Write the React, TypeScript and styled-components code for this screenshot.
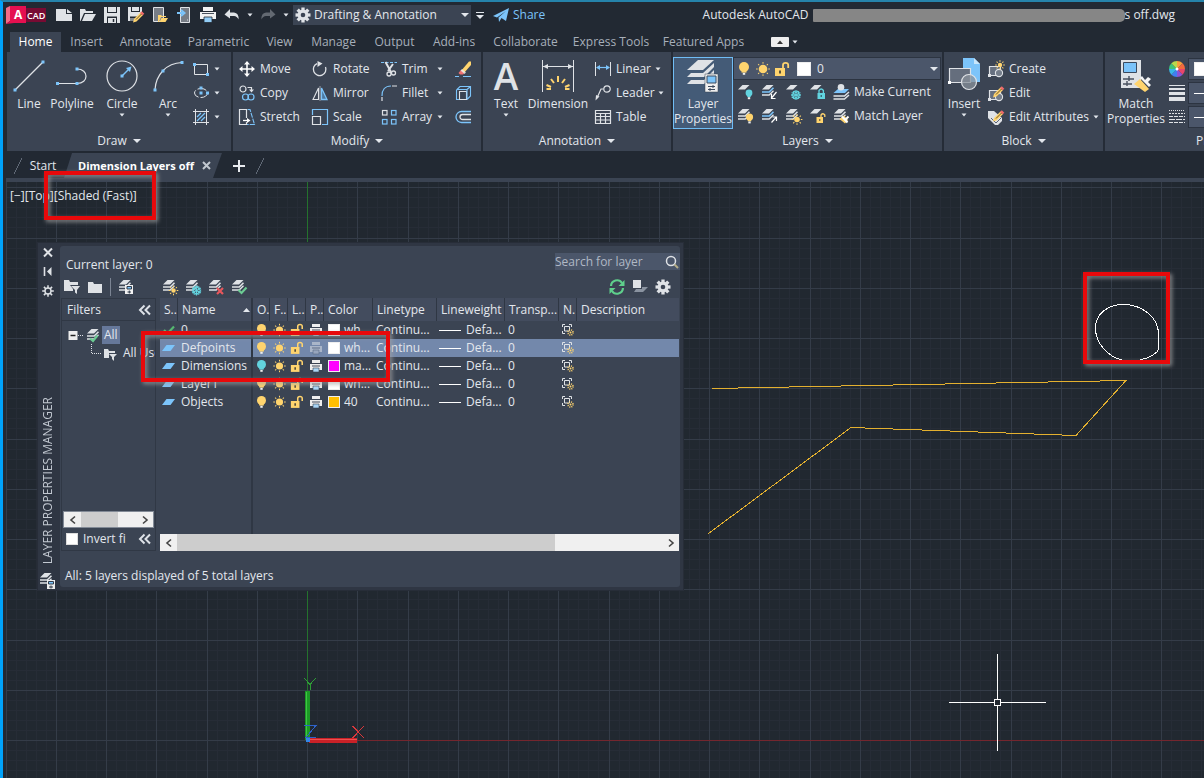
import React from "react";
import styled, { createGlobalStyle, css } from "styled-components";

const c = {
  app: "#222933",
  panel: "#3b4453",
  line: "#252c37",
  field: "#4b566a",
  text: "#e3e7ed",
  muted: "#a7afba",
  icon: "#dfe2e6",
  blue: "#7cc4fa",
  yellow: "#ffd46e",
  cyan: "#62d3df",
  green: "#6bcb93",
  red: "#e8090b",
};

const Global = createGlobalStyle`
  *, *::before, *::after { box-sizing: border-box; }
  body { margin: 0; background: ${c.app}; overflow: hidden; }
  body, button, input, select { font: 12px/16px "Open Sans", "Noto Sans", sans-serif; color: ${c.text}; }
  button { background: none; border: 0; padding: 0; cursor: pointer; }
`;

/* ---------- frame ---------- */
const Window = styled.div`
  position: relative;
  display: flex;
  flex-direction: column;
  min-height: 100vh;
  border-top: 2px solid #2583ab;
  border-left: 3px solid #00a3fb;
  background: ${c.app};
  overflow: hidden;
`;
const TitleBar = styled.header`
  display: flex;
  align-items: center;
  height: 26px;
  padding-left: 3px;
  overflow: hidden;
`;
const Logo = styled.div`
  display: flex;
  width: 40px;
  height: 18px;
  margin-right: 8px;
`;
const QuickTools = styled.div`
  display: flex;
  align-items: center;
  gap: 4px;
`;
const QuickButton = styled.button<{ $w?: number }>`
  display: flex;
  align-items: center;
  justify-content: center;
  width: ${(p) => p.$w ?? 20}px;
  height: 20px;
`;
const Workspace = styled.label`
  display: flex;
  align-items: center;
  width: 178px;
  height: 20px;
  margin-left: 3px;
  padding: 0 2px 0 2px;
  background: ${c.panel};
`;
const PlainSelect = styled.select`
  flex: 1;
  min-width: 0;
  appearance: none;
  border: 0;
  padding: 0 3px;
  background: transparent;
  outline: 0;
`;
const Share = styled.a`
  display: flex;
  align-items: center;
  gap: 4px;
  margin-left: 4px;
  color: ${c.blue};
  text-decoration: none;
`;
const Title = styled.h1`
  display: flex;
  align-items: center;
  margin: 0 29px 0 auto;
  font-size: 12px;
  font-weight: 400;
  white-space: nowrap;
`;
const Redaction = styled.span`
  width: 312px;
  height: 13px;
  margin-left: 4px;
  border-radius: 1px 5px 5px 1px;
  background: #868686;
`;

/* ---------- ribbon ---------- */
const Tabs = styled.nav`
  display: flex;
  align-items: stretch;
  height: 24px;
  padding: 4px 0 0 7px;
`;
const Tab = styled.button<{ $w: number; $active?: boolean }>`
  flex: none;
  width: ${(p) => p.$w}px;
  color: ${(p) => (p.$active ? "#fff" : c.muted)};
  background: ${(p) => (p.$active ? c.panel : "transparent")};
  white-space: nowrap;
`;
const TabTools = styled.button`
  display: flex;
  align-items: center;
  gap: 3px;
  margin-left: 20px;
`;
const Ribbon = styled.div`
  display: flex;
  margin-left: 4px;
  height: 99px;
  background: ${c.panel};
  overflow: hidden;
`;
const Panel = styled.section<{ $w: number }>`
  flex: none;
  display: flex;
  flex-direction: column;
  width: ${(p) => p.$w}px;
  padding-top: 5px;
  border-right: 2px solid ${c.line};
`;
const PanelBody = styled.div`
  display: flex;
  height: 72px;
`;
const PanelTitle = styled.button`
  display: flex;
  align-items: center;
  justify-content: center;
  gap: 6px;
  height: 22px;
  padding-top: 2px;
`;
const BigButton = styled.button<{ $w: number; $active?: boolean }>`
  flex: none;
  display: flex;
  flex-direction: column;
  align-items: center;
  width: ${(p) => p.$w}px;
  height: 72px;
  padding-top: 2px;
  border: 1px solid transparent;
  line-height: 15px;
  ${(p) =>
    p.$active &&
    css`
      border-color: #70bdf5;
      background: #445b77;
    `}
`;
const BigLabel = styled.span`
  margin: 4px 0 2px;
  white-space: nowrap;
`;
const Column = styled.div<{ $w?: number; $pad?: number }>`
  flex: none;
  display: flex;
  flex-direction: column;
  width: ${(p) => (p.$w ? p.$w + "px" : "auto")};
  padding-left: ${(p) => p.$pad ?? 0}px;
`;
const SmallButton = styled.button`
  display: flex;
  align-items: center;
  gap: 5px;
  height: 24px;
  white-space: nowrap;
`;
const Push = styled.span<{ $w: number }>`
  width: ${(p) => p.$w}px;
  text-align: left;
`;
const LayerSelect = styled.label`
  display: flex;
  align-items: center;
  gap: 3px;
  width: 208px;
  height: 23px;
  padding: 0 2px;
  border: 1px solid #2c3441;
  background: ${c.field};
`;
const Swatch = styled.span<{ $color: string; $size?: number }>`
  flex: none;
  width: ${(p) => p.$size ?? 12}px;
  height: ${(p) => p.$size ?? 12}px;
  border: 1px solid #eee;
  background: ${(p) => p.$color};
`;
const IconRow = styled.div`
  display: flex;
  align-items: center;
  gap: 8px;
  height: 24px;
  padding-left: 4px;
`;
const PropField = styled.div`
  display: flex;
  align-items: center;
  width: 120px;
  height: 22px;
  margin: 1px 0;
  padding-left: 5px;
  border: 1px solid #2c3441;
  background: ${c.field};
`;

/* ---------- document tabs ---------- */
const DocTabs = styled.div`
  display: flex;
  align-items: center;
  height: 31px;
  margin-left: 3px;
  padding: 2px 0 0 8px;
  border-bottom: 4px solid ${c.panel};
`;
const Slash = styled.span`
  width: 8px;
  height: 16px;
  background: linear-gradient(to bottom right, transparent 46%, #606976 46%, #606976 54%, transparent 54%);
`;
const DocTab = styled.button`
  width: 42px;
  height: 25px;
`;
const ActiveTab = styled.button`
  display: flex;
  align-items: center;
  gap: 8px;
  width: 158px;
  height: 25px;
  padding-left: 14px;
  background: ${c.panel};
  clip-path: polygon(8px 0, 100% 0, calc(100% - 9px) 100%, 0 100%);
  color: #fff;
  font-size: 11px;
  font-weight: 700;
  white-space: nowrap;
`;

/* ---------- drawing area ---------- */
const Canvas = styled.main`
  position: relative;
  flex: 1;
  min-height: 596px;
  margin-left: 3px;
  background: #212830;
  overflow: hidden;
`;
const Drawing = styled.svg`
  position: absolute;
  inset: 0;
  width: 100%;
  height: 100%;
`;
const ViewLabel = styled.div`
  position: absolute;
  left: 4px;
  top: 6px;
  display: flex;
`;
const Marker = styled.div<{ $x: number; $y: number; $w: number; $h: number }>`
  position: absolute;
  left: ${(p) => p.$x}px;
  top: ${(p) => p.$y}px;
  width: ${(p) => p.$w}px;
  height: ${(p) => p.$h}px;
  border: 4px solid ${c.red};
  filter: drop-shadow(2px 2px 2px rgba(160, 160, 160, 0.8));
  pointer-events: none;
`;

/* ---------- palette ---------- */
const Palette = styled.section`
  position: absolute;
  left: 31px;
  top: 60px;
  display: flex;
  width: 647px;
  padding: 3px 3px 3px 0;
  border: 1px solid #272d38;
  background: #2f3643;
`;
const Strip = styled.div`
  flex: none;
  display: flex;
  flex-direction: column;
  align-items: center;
  gap: 5px;
  width: 22px;
  margin-bottom: -3px;
  padding-right: 2px;
`;
const StripTitle = styled.h2`
  margin: auto 0 3px;
  font-size: 12px;
  font-weight: 400;
  line-height: 16px;
  color: #c3c9d2;
  writing-mode: vertical-rl;
  transform: rotate(180deg);
  white-space: nowrap;
`;
const Main = styled.div`
  flex: 1;
  min-width: 0;
  padding-left: 1px;
  border-radius: 3px;
  background: ${c.panel};
`;
const PaletteTop = styled.div`
  display: flex;
  justify-content: space-between;
  align-items: flex-end;
  height: 27px;
  padding-left: 5px;
`;
const Search = styled.label`
  display: flex;
  align-items: center;
  width: 125px;
  height: 17px;
  margin-bottom: 3px;
  background: ${c.field};
`;
const SearchInput = styled.input`
  flex: 1;
  min-width: 0;
  height: 16px;
  padding: 0;
  border: 0;
  outline: 0;
  background: transparent;
  &::placeholder {
    color: #b0b8c5;
    opacity: 1;
  }
`;
const PaletteTools = styled.div`
  display: flex;
  align-items: center;
  gap: 7px;
  height: 25px;
  padding: 3px 9px 0 3px;
`;
const Rule = styled.span`
  width: 1px;
  height: 18px;
  background: #7b8493;
`;
const Gap = styled.span<{ $w?: number }>`
  width: ${(p) => p.$w ?? 0}px;
  flex: ${(p) => (p.$w ? "none" : "1")};
`;
const Split = styled.div`
  display: flex;
  gap: 4px;
  height: 253px;
  padding-right: 1px;
`;
const Filters = styled.div`
  flex: none;
  display: flex;
  flex-direction: column;
  width: 95px;
  border: 1px solid #303845;
  overflow: hidden;
`;
const FilterHead = styled.div`
  display: flex;
  align-items: center;
  justify-content: space-between;
  height: 22px;
  padding: 0 3px 0 5px;
  border-bottom: 1px solid #303845;
`;
const Tree = styled.ul`
  flex: 1;
  margin: 0;
  padding: 5px 0 0 6px;
  list-style: none;
`;
const TreeItem = styled.li<{ $depth?: number }>`
  display: flex;
  align-items: center;
  gap: 4px;
  height: 18px;
  padding-left: ${(p) => (p.$depth ?? 0) * 23}px;
  white-space: nowrap;
`;
const TreeLabel = styled.span<{ $selected?: boolean }>`
  height: 18px;
  padding: 0 2px;
  line-height: 18px;
  background: ${(p) => (p.$selected ? "#66789a" : "transparent")};
`;
const Scroll = styled.div<{ $h: number }>`
  flex: none;
  display: flex;
  height: ${(p) => p.$h}px;
  background: #f0f0f0;
`;
const ScrollFrame = styled.div`
  margin: 0 1px;
  border: 1px solid #828a96;
`;
const ScrollButton = styled.button`
  display: flex;
  align-items: center;
  justify-content: center;
  width: 17px;
`;
const Track = styled.div`
  flex: 1;
`;
const Thumb = styled.div<{ $pct: number }>`
  width: ${(p) => p.$pct}%;
  height: 100%;
  background: #cdcdcd;
`;
const InvertRow = styled.div`
  display: flex;
  align-items: center;
  justify-content: space-between;
  height: 22px;
  padding: 0 3px 0 4px;
`;
const CheckLabel = styled.label`
  display: flex;
  align-items: center;
  gap: 5px;
  width: 62px;
  overflow: hidden;
  white-space: nowrap;
`;
const Check = styled.input`
  flex: none;
  appearance: none;
  width: 12px;
  height: 12px;
  margin: 0;
  border: 1px solid #ddd;
  background: #fff;
`;
const Grid = styled.div`
  flex: 1;
  min-width: 0;
  display: flex;
  flex-direction: column;
  justify-content: space-between;
  background: linear-gradient(to right, transparent 91px, #2f3744 91px, #2f3744 93px, transparent 93px);
`;
const LayerTable = styled.table`
  width: 100%;
  table-layout: fixed;
  border-collapse: separate;
  border-spacing: 0;
`;
const Th = styled.th<{ $split?: boolean }>`
  height: 23px;
  padding: 0 0 0 4px;
  border-right: ${(p) => (p.$split ? 2 : 1)}px solid #2f3744;
  background: #434c5e;
  font-weight: 400;
  text-align: left;
  white-space: nowrap;
  overflow: hidden;
  &:last-child {
    border-right: 0;
  }
`;
const SortHead = styled.span`
  display: flex;
  align-items: center;
  justify-content: space-between;
`;
const Td = styled.td<{ $split?: boolean; $pad?: number }>`
  height: 18px;
  padding: 0 0 0 ${(p) => p.$pad ?? 2}px;
  border-right: ${(p) => (p.$split ? "2px solid #2f3744" : "0")};
  line-height: 18px;
  white-space: nowrap;
  overflow: hidden;
`;
const Tr = styled.tr<{ $selected?: boolean }>`
  background: ${(p) => (p.$selected ? "#7388ab" : "transparent")};
`;
const Cell = styled.span`
  display: flex;
  align-items: center;
  gap: 4px;
`;
const Weight = styled.span`
  width: 22px;
  height: 1px;
  margin-right: 1px;
  background: #fff;
`;
const Status = styled.p`
  margin: 0;
  padding: 17px 0 3px 4px;
`;

/* ---------- icons ---------- */
const Glyph = styled.svg`
  flex: none;
  display: block;
  overflow: visible;
`;
type IcoProps = { s?: number; h?: number; children?: React.ReactNode };
const Ico = ({ s = 16, h, children }: IcoProps) => (
  <Glyph width={s} height={h ?? s} viewBox={`0 0 ${s} ${h ?? s}`} fill="none" stroke="none" aria-hidden>
    {children}
  </Glyph>
);
const Caret = ({ big }: { big?: boolean }) =>
  big ? (
    <Ico s={8} h={4}><path d="M0 0H8L4 4Z" fill={c.text} /></Ico>
  ) : (
    <Ico s={6} h={4}><path d="M0.5 0.5H5.5L3 3.5Z" fill={c.text} /></Ico>
  );
const Dot = ({ x, y }: { x: number; y: number }) => <rect x={x - 1.5} y={y - 1.5} width="3" height="3" fill={c.blue} />;
const SunShape = ({ x, y, r = 3, color = c.yellow }: { x: number; y: number; r?: number; color?: string }) => (
  <g>
    <circle cx={x} cy={y} r={r} fill={color} />
    {[0, 45, 90, 135, 180, 225, 270, 315].map((a) => (
      <path key={a} d={`M${x} ${y - r - 1}V${y - r - 2.6}`} stroke={color} transform={`rotate(${a} ${x} ${y})`} />
    ))}
  </g>
);
const Flake = ({ x, y }: { x: number; y: number }) => (
  <g stroke={c.cyan} strokeWidth="1.2">
    {[0, 60, 120].map((a) => (
      <path key={a} d={`M${x} ${y - 5}V${y + 5}M${x - 2} ${y - 4.2}L${x} ${y - 2.2}L${x + 2} ${y - 4.2}M${x - 2} ${y + 4.2}L${x} ${y + 2.2}L${x + 2} ${y + 4.2}`} transform={`rotate(${a} ${x} ${y})`} />
    ))}
  </g>
);
const BulbShape = ({ x, y, r = 3.2, color = c.yellow }: { x: number; y: number; r?: number; color?: string }) => (
  <g>
    <circle cx={x} cy={y} r={r} fill={color} />
    <path d={`M${x - r * 0.5} ${y + r * 0.7}H${x + r * 0.5}V${y + r + 0.6}H${x - r * 0.5}Z`} fill={color} />
    <rect x={x - 1.2} y={y + r + 0.8} width="2.4" height="2" fill="#eee" />
  </g>
);
const Sheet = ({ y = 0 }: { y?: number }) => <path d={`M5.5 ${y + 1}H12.5L8 ${y + 5.5}H1Z`} fill={c.icon} />;
const Stack = ({ mid = c.icon }: { mid?: string }) => (
  <g>
    <Sheet />
    <path d="M1 8H8.2L12.5 3.8" stroke={mid} strokeWidth="1.6" />
    <path d="M1 11H8.2L12.5 6.8" stroke={c.icon} strokeWidth="1.4" />
  </g>
);
const BulbIcon = ({ color, big }: { color?: string; big?: boolean }) => (
  <Ico s={big ? 16 : 14}>{big ? <BulbShape x={8} y={6} r={5} color={color} /> : <BulbShape x={7.5} y={5.5} r={4.5} color={color} />}</Ico>
);
const SunIcon = ({ big }: { big?: boolean }) => (
  <Ico s={big ? 16 : 14}>{big ? <SunShape x={8} y={8} r={4.3} /> : <SunShape x={7.5} y={7} r={3.6} />}</Ico>
);
const LockIcon = ({ big }: { big?: boolean }) => (
  <Ico s={big ? 16 : 14}>
    <g transform={big ? undefined : "scale(.86)"}>
      <path d="M1 7H11V15H1Z" fill={c.yellow} />
      <path d="M9 7V4Q9 1.8 11.6 1.8T14.2 4V7" stroke={c.yellow} strokeWidth="1.8" />
      <path d="M6 9.5V12.5" stroke="#4b4636" strokeWidth="1.8" />
    </g>
  </Ico>
);
const PrinterIcon = ({ dim }: { dim?: boolean }) => (
  <Ico s={14}>
    <g opacity={dim ? 0.45 : 1}>
      <path d="M3 1H11V4H3Z" fill="#eee" />
      <path d="M1 5H13V11H1Z" fill="#eee" />
      <path d="M3 7H11" stroke="#444d5c" />
      <path d="M4 9H10V13H4Z" fill={dim ? "#c3cad4" : "#a9d4f5"} stroke="#3b4453" strokeWidth=".6" />
    </g>
  </Ico>
);
const gearPath = (cx: number, cy: number, r: number) =>
  [0, 45, 90, 135].map((a) => (
    <rect key={a} x={cx - r * 0.22} y={cy - r} width={r * 0.44} height={r * 2} fill={c.icon} transform={`rotate(${a} ${cx} ${cy})`} />
  ));
const GearIcon = ({ hole = c.panel }: { hole?: string }) => (
  <Ico>{gearPath(8, 8, 7.5)}<circle cx="8" cy="8" r="5.4" fill={c.icon} /><circle cx="8" cy="8" r="2.3" fill={hole} /></Ico>
);
const Chevrons = () => (
  <Ico s={14} h={12}><path d="M6.5 1.5L2 6L6.5 10.5M12 1.5L7.5 6L12 10.5" stroke="#dde1e7" strokeWidth="2" /></Ico>
);
const Pencil = () => (
  <g>
    <path d="M6 9L12.5 2.5L15 5L8.5 11.5L5 12.5Z" fill={c.yellow} />
    <path d="M12 3L13.8 1.2L16.3 3.7L14.5 5.5Z" fill="#ef6b6b" />
    <path d="M8 9.5L13.5 4" stroke="#6a5223" />
  </g>
);

/* ---------- content ---------- */
const SmallItem = ({ icon, label, w, caret }: { icon: React.ReactNode; label?: string; w?: number; caret?: boolean }) => (
  <SmallButton aria-label={label}>
    {icon}
    {label && (w ? <Push $w={w}>{label}</Push> : <span>{label}</span>)}
    {caret && <Caret />}
  </SmallButton>
);
const BigItem = ({ icon, label, w, caret, active }: { icon: React.ReactNode; label: string[]; w: number; caret?: boolean; active?: boolean }) => (
  <BigButton $w={w} $active={active}>
    {icon}
    <BigLabel>{label.map((l, i) => <React.Fragment key={l}>{i > 0 && <br />}{l}</React.Fragment>)}</BigLabel>
    {caret && <Caret />}
  </BigButton>
);
const RibbonPanel = ({ w, title, children }: { w: number; title: string; children: React.ReactNode }) => (
  <Panel $w={w}>
    <PanelBody>{children}</PanelBody>
    <PanelTitle>{title}<Caret big /></PanelTitle>
  </Panel>
);

const TABS: [string, number][] = [
  ["Home", 51], ["Insert", 51], ["Annotate", 67], ["Parametric", 79], ["View", 43], ["Manage", 65],
  ["Output", 57], ["Add-ins", 62], ["Collaborate", 81], ["Express Tools", 90], ["Featured Apps", 95],
];

const TopBar = () => (
  <TitleBar>
    <Logo>
      <Ico s={40} h={18}>
        <path d="M0 2L4 0V15L0 18Z" fill="#f36a86" />
        <path d="M4 0H20V17H8L0 18L4 15Z" fill="#e51050" />
        <path d="M20 2H40V16H20Z" fill="#780b33" />
        <text x="8" y="13" fontSize="12" fontWeight="700" fill="#fff">A</text>
        <text x="21" y="13" fontSize="9" fontWeight="600" fill="#fff">CAD</text>
      </Ico>
    </Logo>
    <QuickTools>
      <QuickButton aria-label="New"><Ico><path d="M0 2H10V7H16V14H0Z" fill={c.icon} /><path d="M11 2L16 6H11Z" fill={c.icon} /></Ico></QuickButton>
      <QuickButton aria-label="Open"><Ico><path d="M0 14V2H5L6 4H13V6H4L0.5 14Z" fill={c.icon} /><path d="M5 7H16L12 14H2Z" fill={c.icon} /></Ico></QuickButton>
      <QuickButton aria-label="Save"><Ico><path d="M0 0H16V16H0Z" fill={c.icon} /><path d="M3 0H13V6H3ZM3 9.5H13V16H3Z" fill={c.app} /><path d="M4 0H12V5H4ZM4 11H12V16H4Z" fill={c.icon} /><path d="M9.5 12V15" stroke={c.app} strokeWidth="1.5" /></Ico></QuickButton>
      <QuickButton aria-label="Save As"><Ico><path d="M0 0H14V8L7 14H0Z" fill={c.icon} /><path d="M3 0H12V5H3ZM2 9.5H9V14H2Z" fill={c.app} /><path d="M4 0H11V4H4Z" fill={c.icon} /><path d="M3 11V14M5 11V14M7 11V14" stroke={c.icon} /><g transform="translate(0 3)"><Pencil /></g></Ico></QuickButton>
      <QuickButton aria-label="Open from mobile"><Ico><path d="M1.5 0.5H11.5V14.5H1.5Z" fill="#777d86" stroke={c.icon} /><path d="M6 15V8H9L10 9H14V10H9L7 15Z" fill={c.yellow} /><path d="M9.5 11H16L13.5 15H7.5Z" fill={c.yellow} /></Ico></QuickButton>
      <QuickButton aria-label="Save to mobile"><Ico><path d="M4.5 0.5H13.5V15.5H4.5Z" fill="#777d86" stroke={c.icon} /><path d="M1 6H7M5 3L8.5 6L5 9" stroke={c.blue} strokeWidth="2" /><path d="M11 13H12" stroke={c.icon} /></Ico></QuickButton>
      <QuickButton aria-label="Plot"><Ico><path d="M3 0H13V4H3ZM0 5H16V12H0Z" fill="#f2f2f2" /><path d="M2 6.5H14" stroke="#4a515d" /><path d="M4 10H12V15.5H4Z" fill="#92ccf6" stroke={c.app} strokeWidth=".8" /></Ico></QuickButton>
      <QuickButton aria-label="Undo"><Ico><path d="M6 2L0.5 7.5L6 11.5V9H10Q13 9 14.5 12.5Q15 6 10 5.5H6Z" fill={c.icon} /></Ico></QuickButton>
      <QuickButton $w={8} aria-label="Undo list"><Caret /></QuickButton>
      <QuickButton aria-label="Redo"><Ico><path d="M10 2L15.5 7.5L10 11.5V9H6Q3 9 1.5 12.5Q1 6 6 5.5H10Z" fill="#636972" /></Ico></QuickButton>
      <QuickButton $w={8} aria-label="Redo list"><Caret /></QuickButton>
    </QuickTools>
    <Workspace>
      <GearIcon />
      <PlainSelect aria-label="Workspace"><option>Drafting &amp; Annotation</option></PlainSelect>
      <Caret big />
    </Workspace>
    <QuickButton $w={18} aria-label="Customize"><Ico s={8} h={7}><path d="M0 0.5H8" stroke={c.text} /><path d="M0 3H8L4 7Z" fill={c.text} /></Ico></QuickButton>
    <Share href="#share"><Ico><path d="M0 9L16 1L13 14L8.5 11L6 15L5.5 10.5L13 4L4 10.5Z" fill={c.blue} /></Ico>Share</Share>
    <Title>Autodesk AutoCAD<Redaction />s off.dwg</Title>
  </TitleBar>
);

const DrawPanel = () => (
  <RibbonPanel w={226} title="Draw">
    <BigItem w={44} label={["Line"]} icon={<Ico s={32}><path d="M2.5 29.5L29.5 2.5" stroke={c.icon} strokeWidth="1.2" /><Dot x={2} y={30} /><Dot x={30} y={2} /></Ico>} />
    <BigItem w={42} label={["Polyline"]} icon={<Ico s={32}><path d="M2 23.5H21C33 23.5 33 9 21 9" stroke={c.icon} strokeWidth="1.2" /><Dot x={1.5} y={23.5} /><Dot x={21} y={23.5} /><Dot x={21} y={9} /></Ico>} />
    <BigItem w={58} caret label={["Circle"]} icon={<Ico s={32}><circle cx="16" cy="16" r="15" stroke={c.icon} strokeWidth="1.2" /><path d="M16 16L23 9" stroke={c.blue} strokeWidth="1.4" /><path d="M25.5 6.5L24 12L20 8Z" fill={c.blue} /><Dot x={16} y={16} /></Ico>} />
    <BigItem w={34} caret label={["Arc"]} icon={<Ico s={32}><path d="M3 29.5C4 15 14 3 30 2.5" stroke={c.icon} strokeWidth="1.2" /><Dot x={3} y={30} /><Dot x={11} y={11} /><Dot x={30} y={2.5} /></Ico>} />
    <Column $pad={8}>
      <SmallButton aria-label="Rectangle"><Ico><path d="M1.5 3.5H14.5V13.5H1.5Z" stroke={c.icon} /><Dot x={1.5} y={3.5} /><Dot x={14.5} y={13.5} /></Ico><Caret /></SmallButton>
      <SmallButton aria-label="Ellipse"><Ico><ellipse cx="8" cy="8" rx="6.5" ry="4.5" stroke={c.icon} strokeDasharray="9 2" /><Dot x={8} y={8} /><Dot x={8} y={3} /><Dot x={14.5} y={8} /></Ico><Caret /></SmallButton>
      <SmallButton aria-label="Hatch"><Ico><path d="M2.5 0V16M13.5 0V16M0 2.5H16M0 13.5H16" stroke={c.icon} /><path d="M4 8L8 4M4 12L12 4M8 12L12 8" stroke={c.blue} strokeWidth="1.3" /></Ico><Caret /></SmallButton>
    </Column>
  </RibbonPanel>
);

const ModifyPanel = () => (
  <RibbonPanel w={250} title="Modify">
    <Column $w={79} $pad={6}>
      <SmallItem label="Move" icon={<Ico><path d="M8 1V15M1 8H15" stroke="#fff" strokeWidth="1.6" /><path d="M8 0L11 3.5H5ZM8 16L11 12.5H5ZM0 8L3.5 5V11ZM16 8L12.5 5V11Z" fill="#fff" /></Ico>} />
      <SmallItem label="Copy" icon={<Ico><circle cx="4" cy="4" r="3" stroke={c.icon} strokeWidth="1.2" /><path d="M8.5 2.5H12.5V5" stroke={c.icon} strokeWidth="1.2" /><path d="M10 4.5H15L12.5 7.5Z" fill={c.icon} /><circle cx="6.5" cy="12" r="3" stroke={c.blue} strokeWidth="1.2" /><circle cx="12" cy="12" r="3" stroke={c.blue} strokeWidth="1.2" /></Ico>} />
      <SmallItem label="Stretch" icon={<Ico><path d="M7.5 9V0.5H0.5V15.5H7.5V13" stroke={c.icon} strokeWidth="1.2" /><path d="M4 11.5H9" stroke="#fff" strokeWidth="1.3" /><path d="M8 9L11.5 11.5L8 14Z" fill="#fff" /><path d="M8.5 0.5H11L15.5 15.5H8" stroke={c.blue} strokeWidth="1.1" strokeDasharray="5 1" /></Ico>} />
    </Column>
    <Column $w={69}>
      <SmallItem label="Rotate" icon={<Ico><path d="M5 2.6A6.3 6.3 0 1 0 13.5 6" stroke={c.icon} strokeWidth="1.3" /><path d="M5.500 0L10.5 2.5L5.5 6Z" fill={c.icon} /></Ico>} />
      <SmallItem label="Mirror" icon={<Ico><path d="M6.5 3V14.5H1Z" stroke={c.icon} strokeWidth="1.1" /><path d="M9.5 3V14.5H15Z" stroke={c.blue} strokeWidth="1.3" fill="#4d79a0" /><path d="M8 1V16" stroke={c.icon} strokeWidth=".6" /></Ico>} />
      <SmallItem label="Scale" icon={<Ico><path d="M0.5 6V0.5H15.5V15.5H10" stroke={c.blue} strokeWidth="1.2" /><path d="M0.5 7.5H8.5V15.5H0.5Z" stroke={c.icon} strokeWidth="1.2" /></Ico>} />
    </Column>
    <Column $w={74}>
      <SmallItem label="Trim" w={30} caret icon={<Ico><path d="M0 1.5H16" stroke={c.blue} strokeDasharray="3 1.5" /><path d="M4.500 1L10 11M12 3L7 10" stroke={c.icon} strokeWidth="2" /><circle cx="8" cy="13" r="2" stroke={c.icon} strokeWidth="1.3" /><circle cx="12.5" cy="12" r="2" stroke={c.icon} strokeWidth="1.3" /></Ico>} />
      <SmallItem label="Fillet" w={30} caret icon={<Ico><path d="M1 16V12M11 1H16" stroke={c.icon} strokeWidth="1.2" /><path d="M1 11C1 5 4 1 10 1" stroke={c.blue} strokeWidth="1.2" /></Ico>} />
      <SmallItem label="Array" w={30} caret icon={<Ico>{[[1, 1], [10, 1], [1, 10], [10, 10]].map(([x, y], i) => <rect key={i} x={x + 0.5} y={y + 0.5} width="4.5" height="4.5" stroke={i ? c.blue : c.icon} strokeWidth="1.2" />)}</Ico>} />
    </Column>
    <Column>
      <SmallButton aria-label="Erase"><Ico><path d="M6 10L14 0.5H16V4L9 12Z" fill={c.yellow} /><path d="M6 9L9.5 12.2L8 13.5H5L3.5 12Z" fill="#f07171" /><path d="M5.5 9.5L7 8L11 11.5L9.5 13Z" fill="#eee" opacity=".8" /><path d="M0 15.5H4M8 15.5H16" stroke={c.blue} /></Ico></SmallButton>
      <SmallButton aria-label="Explode"><Ico><path d="M4.5 6.5H11.5V14.5H4.5Z" stroke={c.icon} strokeWidth="1.1" /><path d="M1.5 5V14.5H4M1.5 5L5 1.5H15.5V11L12 14.5M1.5 4.5H12V14M12 4.5L15.5 1.5" stroke={c.blue} strokeWidth="1.1" /></Ico></SmallButton>
      <SmallButton aria-label="Offset"><Ico><path d="M16 2.5H6.5A5.5 5.5 0 0 0 6.5 13.5H16" stroke={c.blue} strokeWidth="1.3" /><path d="M16 5.5H7.5A2.5 2.5 0 0 0 7.5 10.5H16" stroke={c.icon} strokeWidth="1.3" /></Ico></SmallButton>
    </Column>
  </RibbonPanel>
);

const AnnotationPanel = () => (
  <RibbonPanel w={190} title="Annotation">
    <BigItem w={46} caret label={["Text"]} icon={<Ico s={32}><text x="16" y="30" textAnchor="middle" fontSize="37" fontWeight="600" fill={c.icon}>A</text></Ico>} />
    <BigItem w={58} label={["Dimension"]} icon={<Ico s={32}><path d="M0.5 0V32M31.5 0V32" stroke={c.icon} /><path d="M1 6.5H31" stroke={c.icon} /><path d="M1 6.5L6 4V9ZM31 6.5L26 4V9Z" fill={c.icon} /><path d="M16 16V22M9 19L12 23M23 19L20 23M4.5 25L9 27M27.5 25L23 27M4.5 29H9M23 29H27.5" stroke={c.yellow} strokeWidth="2" /></Ico>} />
    <Column $pad={8}>
      <SmallItem label="Linear" w={34} caret icon={<Ico><path d="M0.5 1V15M15.5 1V15" stroke={c.icon} /><path d="M2 6.5H14" stroke={c.blue} strokeWidth="1.2" /><path d="M1 6.5L5 4V9ZM15 6.5L11 4V9Z" fill={c.blue} /></Ico>} />
      <SmallItem label="Leader" w={37} caret icon={<Ico><circle cx="12" cy="4" r="3.2" stroke={c.icon} strokeWidth="1.2" /><path d="M8.5 4H6L2 13" stroke={c.icon} strokeWidth="1.2" /><path d="M0.5 15.5L1 10L4.5 11.5Z" fill={c.icon} /></Ico>} />
      <SmallItem label="Table" icon={<Ico><path d="M0.5 1.5H15.5V14.5H0.5ZM0.5 4.5H15.5M0.5 7.5H15.5M0.5 11H15.5M5.500 4.500V14.500M10.500 4.500V14.500" stroke={c.icon} strokeWidth="1.2" /></Ico>} />
    </Column>
  </RibbonPanel>
);

const Device = ({ x, y }: { x: number; y: number }) => (
  <g transform={`translate(${x} ${y})`}>
    <path d="M0 0H13V18H0Z" fill="#eee" stroke={c.panel} strokeWidth=".5" />
    <path d="M2 2H11V9H2Z" fill={c.blue} stroke="#3b4a5e" />
    <path d="M3 12.5H10M3 15.5H10M8 11V14M5 14V17" stroke="#3b4a5e" />
  </g>
);
const LayersPanel = () => (
  <RibbonPanel w={271} title="Layers">
    <BigItem w={60} active label={["Layer", "Properties"]} icon={<Ico s={32}><path d="M11 0H27L16 10H0Z" fill={c.icon} /><path d="M4 13H16L27 3V7L17 17H0ZM4 20H17L27 10V14L17 24H0Z" fill={c.icon} /><Device x={18} y={14} /></Ico>} />
    <Column>
      <LayerSelect>
        <BulbIcon big /><SunIcon big /><LockIcon big /><Gap $w={1} /><Swatch $color="#fff" $size={14} />
        <PlainSelect aria-label="Layer"><option>0</option></PlainSelect>
        <Caret big />
      </LayerSelect>
      <IconRow>
        <Ico><Sheet /><BulbShape x={12} y={9} r={3.4} color={c.cyan} /></Ico>
        <Ico><Stack mid={c.blue} /><path d="M15.5 8L11 13.5M10.5 10V14.5H14.5" stroke="#fff" strokeWidth="1.2" /></Ico>
        <Ico><Sheet /><Flake x={11} y={11} /></Ico>
        <Ico><Sheet /><path d="M8.5 9H16V15H8.5Z" fill={c.cyan} /><path d="M10 9V6.5Q12.2 3.5 14.4 6.5V9" stroke={c.cyan} strokeWidth="1.3" /><path d="M12.2 11V13" stroke="#27424a" /></Ico>
        <SmallItem label="Make Current" icon={<Ico><path d="M5 5H16L12 9H0.5Z" fill={c.blue} /><circle cx="8" cy="3.3" r="3.3" fill={c.icon} /><path d="M0.5 12H11.5L16 8M0.5 15H11.5L16 11" stroke={c.icon} strokeWidth="1.5" /></Ico>} />
      </IconRow>
      <IconRow>
        <Ico><Stack /><BulbShape x={12.5} y={9} r={3.6} /></Ico>
        <Ico><Stack mid={c.blue} /><path d="M10.5 14.5L15 9.5M11.5 9H15.5V13" stroke="#fff" strokeWidth="1.2" /></Ico>
        <Ico><Stack /><SunShape x={12} y={11.5} r={2.8} /></Ico>
        <Ico><Sheet /><path d="M7.5 9H14V15H7.5Z" fill={c.yellow} /><path d="M12 9V7Q14 4.5 15.8 7V9" stroke={c.yellow} strokeWidth="1.3" /><path d="M10.8 11V13" stroke="#4b4636" /></Ico>
        <SmallItem label="Match Layer" icon={<Ico><Stack /><path d="M6.5 11L11 7.5L15 12L12 15.5Z" fill={c.yellow} /><path d="M9 8.5L14.5 14.5" stroke="#fff" strokeWidth="2" /><path d="M12 12L15.5 8.5" stroke="#fff" strokeWidth="2" /></Ico>} />
      </IconRow>
    </Column>
  </RibbonPanel>
);

const BlockBase = () => (
  <g>
    <path d="M1.5 5.5H12.5V14.5H1.5Z" fill="#667080" stroke={c.icon} strokeWidth="1.2" />
    <circle cx="11" cy="12" r="3.6" fill="#747d8a" stroke={c.icon} strokeWidth="1.1" />
    <path d="M0 13H3V16H0Z" fill={c.icon} />
  </g>
);
const BlockPanel = () => (
  <RibbonPanel w={161} title="Block">
    <BigItem w={40} caret label={["Insert"]} icon={<Ico s={32}><path d="M15 -2H26L32 4V22H15Z" fill={c.blue} /><path d="M26 -2V4H32" fill="#c8e6fb" /><path d="M1.5 8.5H22.5V22.5H1.5Z" fill="#656e7d" stroke={c.icon} strokeWidth="1.2" /><circle cx="21" cy="22" r="7.5" fill="#8a919b" fillOpacity=".75" stroke={c.icon} strokeWidth="1.2" /><path d="M0 21H3V24H0Z" fill="#fff" /></Ico>} />
    <Column $pad={4}>
      <SmallItem label="Create" icon={<Ico><BlockBase /><SunShape x={12} y={4} r={2.2} /></Ico>} />
      <SmallItem label="Edit" icon={<Ico><BlockBase /><Pencil /></Ico>} />
      <SmallItem label="Edit Attributes" w={79} caret icon={<Ico><path d="M0 2H6L14 9V12L10 16H7L0 9Z" fill={c.icon} /><path d="M3 9L8 14L13 9" stroke="#5b6472" /><Pencil /></Ico>} />
    </Column>
  </RibbonPanel>
);

const wheel = ["#f7a03c", "#f26a3d", "#e8456a", "#8b54d6", "#3f7ff0", "#38b6e8", "#3fc47a", "#b9d84c"];
const PropertiesPanel = () => (
  <RibbonPanel w={256} title="Properties">
    <BigItem w={62} label={["Match", "Properties"]} icon={<Ico s={32}><path d="M1 0H21V28H1Z" fill={c.icon} /><path d="M3.5 2.5H16.5V12.5H3.5Z" fill={c.blue} stroke="#3b4a5e" /><path d="M3 19H14M3 24H12M9 16V21M7 21V26" stroke="#4a5260" strokeWidth="1.4" /><path d="M14 24L20 19L29 29L25 32Z" fill={c.yellow} /><path d="M20 18L29 27L31 25L28 22L31 19L28 17L25 20L22 16Z" fill="#f5f5f5" /></Ico>} />
    <Column $pad={2}>
      <SmallButton aria-label="Object color">
        <Ico>{wheel.map((f, i) => { const a = (i * Math.PI) / 4, b = a + Math.PI / 4; return <path key={f} fill={f} d={`M8 8L${8 + 8 * Math.sin(a)} ${8 - 8 * Math.cos(a)}A8 8 0 0 1 ${8 + 8 * Math.sin(b)} ${8 - 8 * Math.cos(b)}Z`} />; })}<circle cx="8" cy="8" r="1.5" fill="#fff" /></Ico>
      </SmallButton>
      <SmallButton aria-label="Lineweight"><Ico><path d="M0 0.5H16" stroke={c.icon} /><path d="M0 4H16" stroke={c.icon} strokeWidth="2" /><path d="M0 8.5H16" stroke={c.icon} strokeWidth="3" /><path d="M0 14H16" stroke={c.icon} strokeWidth="4" /></Ico></SmallButton>
      <SmallButton aria-label="Linetype"><Ico><path d="M0 1.5H16" stroke={c.icon} strokeDasharray="1 1" /><path d="M0 4.5H16" stroke={c.icon} strokeDasharray="2 1" /><path d="M0 7.5H16M0 13.5H16" stroke={c.icon} strokeDasharray="4 1" /><path d="M0 10.5H16" stroke={c.icon} strokeDasharray="6 1" /></Ico></SmallButton>
    </Column>
    <Column $pad={3}>
      <PropField><Swatch $color="#fff" $size={14} /></PropField>
      <PropField><Weight /></PropField>
      <PropField><Weight /></PropField>
    </Column>
  </RibbonPanel>
);

const OX = 307.5;
const OY = 740.5;
const STEP = 50.25;
const snap = (v: number) => Math.floor(v) + 0.5;
const lines = (origin: number, from: number, to: number) => {
  const out: { p: number; major: boolean }[] = [];
  for (let i = -200; i < 250; i++) {
    const p = snap(origin + (i * STEP) / 5);
    if (p >= from && p <= to) out.push({ p, major: i % 5 === 0 });
  }
  return out;
};
const gridX = lines(OX, 6, 2600);
const gridY = lines(OY, 182, 1600);

const Model = () => (
  <Drawing fill="none" shapeRendering="crispEdges" aria-hidden>
    <g transform="translate(-6 -182)">
      {[false, true].map((major) => (
        <g key={String(major)} stroke={major ? "#343c48" : "#262c36"}>
          {gridX.filter((l) => l.major === major).map((l) => <path key={"x" + l.p} d={`M${l.p} 182V1600`} />)}
          {gridY.filter((l) => l.major === major).map((l) => <path key={"y" + l.p} d={`M6 ${l.p}H2600`} />)}
        </g>
      ))}
      <path d="M307.5 182V692" stroke="#24722d" />
      <path d="M357 740.5H2600" stroke="#74262e" />
      <path d="M712.5 388.5L1126 380.5L1076 435.5L851 427.5L708.5 533.5" stroke="#e3b02f" />
      <path d="M1095.5 328C1095.5 314 1108 304.5 1123 304.5C1143 304.5 1158.5 318 1158.5 334V349C1158 353 1149 358 1140 360Q1131 363 1122 360C1108 357 1095.5 343 1095.5 328Z" stroke="#fff" />
      <path d="M949 702.5H994M1001 702.5H1046M997.5 654V699M997.5 706V751M994.5 699.5H1000.5V705.5H994.5Z" stroke="#fff" />
      <path d="M305 691H310V740H305Z" fill="#1c9a26" />
      <path d="M306.5 692V740" stroke="#3fc544" />
      <path d="M309 738H357V743H309Z" fill="#c92127" />
      <path d="M309 739.5H357" stroke="#f05050" />
      <path d="M304.5 678.5L310 684.5L315.5 678.5M310.5 684V690" stroke="#2e9c36" />
      <path d="M352.5 726L364 738M364 726L352.5 738" stroke="#d8383c" />
      <path d="M304 725.5H316L306 737.5H316" stroke="#2e62c8" />
      <path d="M306 738H310V742H306Z" fill="#3486e8" />
    </g>
  </Drawing>
);

type Layer = { name: string; color: string; hex: string; bulb?: string; current?: boolean; selected?: boolean; noPlot?: boolean };
const LAYERS: Layer[] = [
  { name: "0", color: "wh...", hex: "#fff", current: true },
  { name: "Defpoints", color: "wh...", hex: "#fff", selected: true, noPlot: true },
  { name: "Dimensions", color: "ma...", hex: "#f0f", bulb: c.cyan },
  { name: "Layer1", color: "wh...", hex: "#fff" },
  { name: "Objects", color: "40", hex: "#ffbf00" },
];
const COLS = [18, 75, 17, 18, 18, 18, 49, 64, 68, 54, 18, 102];

const ScrollBar = ({ h, pct }: { h: number; pct: number }) => (
  <Scroll $h={h}>
    <ScrollButton aria-label="Scroll left"><Ico s={8}><path d="M6 0.5L2 4L6 7.5" stroke="#444" strokeWidth="1.6" /></Ico></ScrollButton>
    <Track><Thumb $pct={pct} /></Track>
    <ScrollButton aria-label="Scroll right"><Ico s={8}><path d="M2 0.5L6 4L2 7.5" stroke="#444" strokeWidth="1.6" /></Ico></ScrollButton>
  </Scroll>
);

const LayerPalette = () => (
  <Palette>
    <Strip>
      <Ico s={14}><path d="M3 2.5L11 10.5M11 2.5L3 10.5" stroke={c.icon} strokeWidth="2" /></Ico>
      <Ico s={14}><path d="M3.5 2V11" stroke={c.icon} strokeWidth="1.6" /><path d="M10.5 2V11L6 6.5Z" fill={c.icon} /></Ico>
      <Ico s={14}><circle cx="7" cy="7" r="3" stroke={c.icon} strokeWidth="1.4" />{[0, 45, 90, 135, 180, 225, 270, 315].map((a) => <path key={a} d="M7 4V1.200" stroke={c.icon} strokeWidth="1.500" transform={`rotate(${a} 7 7)`} />)}</Ico>
      <StripTitle>LAYER PROPERTIES MANAGER</StripTitle>
      <Ico s={18}><Stack /><path d="M8 8H16V17H8Z" fill="#eee" /><path d="M9.5 9.5H14.5V12H9.5Z" fill={c.blue} stroke="#333c4a" /><path d="M10 15H14M12 13.5V16.5" stroke="#333c4a" /></Ico>
    </Strip>
    <Main>
      <PaletteTop>
        <span>Current layer: 0</span>
        <Search>
          <SearchInput placeholder="Search for layer" aria-label="Search for layer" />
          <Ico><circle cx="7" cy="7" r="4.5" stroke={c.icon} strokeWidth="1.5" /><path d="M10.5 10.5L14 14" stroke="#b5ad88" strokeWidth="2" /></Ico>
        </Search>
      </PaletteTop>
      <PaletteTools>
        <Ico><path d="M0 12V1H5L6 3H14V6H6L9 10V12Z" fill={c.icon} /><path d="M7 7H16L13 11V15L11 13.5V11Z" fill={c.icon} /></Ico>
        <Ico><path d="M1 14V3H6L7 5H15V14Z" fill={c.icon} /></Ico>
        <Rule />
        <Ico><Stack /><path d="M7 6H15V15H7Z" fill="#f2f2f2" /><path d="M9 7.5H13.5V10H9Z" fill={c.blue} stroke="#333c4a" /><path d="M9.5 13H13M11.3 11.5V14.5" stroke="#333c4a" /></Ico>
        <Gap $w={14} />
        <Ico><Stack /><SunShape x={11.5} y={11.5} r={2.2} /></Ico>
        <Ico><Stack /><Flake x={11.5} y={11.5} /></Ico>
        <Ico><Stack /><path d="M9 9L15 15M15 9L9 15" stroke="#e8575c" strokeWidth="2.2" /></Ico>
        <Ico><Stack /><path d="M7.5 11L10.5 14L15.5 8.5" stroke={c.green} strokeWidth="2.2" /></Ico>
        <Gap />
        <Ico><path d="M2 7A6 6 0 0 1 13 4M14 9A6 6 0 0 1 3 12" stroke="#5fd08c" strokeWidth="2.2" /><path d="M15.5 1V7H9.5ZM0.5 15V9H6.5Z" fill="#5fd08c" /></Ico>
        <Ico><path d="M1 1H9V9H1Z" fill={c.icon} /><path d="M10 8H16L11 13H2L4 10H10Z" fill="#8a93a0" /></Ico>
        <GearIcon />
      </PaletteTools>
      <Split>
        <Filters>
          <FilterHead>Filters<Chevrons /></FilterHead>
          <Tree>
            <TreeItem>
              <Ico s={14}><path d="M0.5 3H9.5V12H0.5Z" fill="#eee" /><path d="M2.5 7.5H7.5" stroke="#222" strokeWidth="1.5" /><path d="M10 7.5H16" stroke={c.icon} strokeDasharray="1 1" /></Ico>
              <Ico s={12} h={14}><Stack /><path d="M4 10.5L7 13L11.5 7.5" stroke={c.green} strokeWidth="2" /></Ico>
              <TreeLabel $selected>All</TreeLabel>
            </TreeItem>
            <TreeItem $depth={1}>
              <Ico s={9} h={18}><path d="M0.5 0V9.5H10" stroke={c.icon} strokeDasharray="1 1" /></Ico>
              <Ico s={13}><path d="M0 11V2H4L5 4H11V6H5V11Z" fill={c.icon} /><path d="M5 7H13L10 10V14L8 12V10Z" fill={c.icon} /></Ico>
              <TreeLabel>All Use</TreeLabel>
            </TreeItem>
          </Tree>
          <ScrollFrame><ScrollBar h={15} pct={68} /></ScrollFrame>
          <InvertRow>
            <CheckLabel><Check type="checkbox" /><span>Invert fi</span></CheckLabel>
            <Chevrons />
          </InvertRow>
        </Filters>
        <Grid>
          <LayerTable>
            <colgroup>{COLS.map((w, i) => <col key={i} style={{ width: w }} />)}</colgroup>
            <thead>
              <tr>
                <Th>S..</Th>
                <Th $split><SortHead>Name<Ico s={8} h={4}><path d="M0 4H7L3.5 0Z" fill={c.text} /></Ico></SortHead></Th>
                <Th>O.</Th><Th>F..</Th><Th>L..</Th><Th>P..</Th><Th>Color</Th><Th>Linetype</Th><Th>Lineweight</Th><Th>Transp...</Th><Th>N.</Th><Th>Description</Th>
              </tr>
            </thead>
            <tbody>
              {LAYERS.map((l) => (
                <Tr key={l.name} $selected={l.selected}>
                  <Td>
                    {l.current ? <Ico s={14}><path d="M2 7L5.5 10.5L12 3.5" stroke="#55b86f" strokeWidth="2.2" /></Ico>
                      : <Ico s={14}><path d="M4.5 4H13L8.5 10H0Z" fill={c.blue} /></Ico>}
                  </Td>
                  <Td $split $pad={3}>{l.name}</Td>
                  <Td $pad={1}><BulbIcon color={l.bulb} /></Td>
                  <Td><SunIcon /></Td>
                  <Td><LockIcon /></Td>
                  <Td $pad={3}><PrinterIcon dim={l.noPlot} /></Td>
                  <Td $pad={4}><Cell><Swatch $color={l.hex} />{l.color}</Cell></Td>
                  <Td $pad={3}>Continu...</Td>
                  <Td><Cell><Weight />Defa...</Cell></Td>
                  <Td $pad={3}>0</Td>
                  <Td><Ico s={14}><path d="M1.5 4V1.5H4M8 1.5H10.5V4M1.5 8V10.5H4M3.5 3.5H8.5V8H3.5Z" stroke={c.icon} /><circle cx="9.5" cy="9.5" r="2.5" stroke={c.yellow} strokeWidth="1.5" strokeDasharray="1 1" /><circle cx="9.5" cy="9.5" r="1" fill={c.yellow} /></Ico></Td>
                  <Td />
                </Tr>
              ))}
            </tbody>
          </LayerTable>
          <ScrollBar h={17} pct={78} />
        </Grid>
      </Split>
      <Status>All: 5 layers displayed of 5 total layers</Status>
    </Main>
  </Palette>
);

export default function App() {
  return (
    <Window>
      <Global />
      <TopBar />
      <Tabs>
        {TABS.map(([t, w], i) => <Tab key={t} $w={w} $active={i === 0}>{t}</Tab>)}
        <TabTools aria-label="Ribbon display">
          <Ico s={18} h={10}><rect x="0" y="0" width="18" height="10" rx="1" fill="#eee" /><path d="M6 7H12L9 3.5Z" fill="#333" /></Ico>
          <Caret />
        </TabTools>
      </Tabs>
      <Ribbon>
        <DrawPanel />
        <ModifyPanel />
        <AnnotationPanel />
        <LayersPanel />
        <BlockPanel />
        <PropertiesPanel />
      </Ribbon>
      <DocTabs>
        <Slash />
        <DocTab>Start</DocTab>
        <ActiveTab>Dimension Layers off<Ico s={9}><path d="M1 1L8 8M8 1L1 8" stroke="#c2c8d0" strokeWidth="2" /></Ico></ActiveTab>
        <QuickButton $w={34} aria-label="New tab"><Ico s={12}><path d="M6 0V12M0 6H12" stroke="#e8ebef" strokeWidth="2" /></Ico></QuickButton>
        <Slash />
      </DocTabs>
      <Canvas>
        <Model />
        <ViewLabel><span>[−]</span><span>[Top]</span><span>[Shaded (Fast)]</span></ViewLabel>
        <LayerPalette />
      </Canvas>
      <Marker $x={41} $y={169} $w={112} $h={49} />
      <Marker $x={138} $y={329} $w={249} $h={51} />
      <Marker $x={1080} $y={270} $w={87} $h={92} />
    </Window>
  );
}
